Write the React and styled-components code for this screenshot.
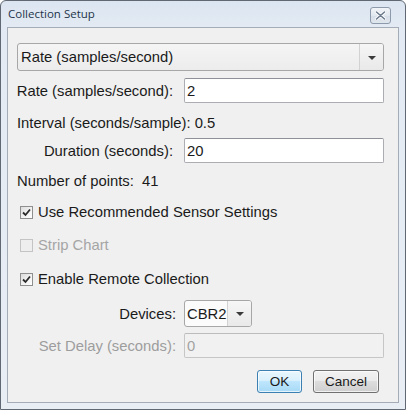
import React from "react";
import styled, { createGlobalStyle } from "styled-components";

const Global = createGlobalStyle`
  html, body { margin: 0; padding: 0; background: #ffffff; }
  * { box-sizing: border-box; }
`;

const Window = styled.div`
  width: 406px;
  height: 410px;
  border: 1px solid #5f6873;
  border-radius: 6px 6px 0 0;
  background: linear-gradient(180deg, #dbe5f1 0px, #e3eaf3 26px, #e9eef5 100%);
  display: flex;
  flex-direction: column;
  font-family: "Liberation Sans", Arial, sans-serif;
  font-size: 14.8px;
  color: #1a1a1a;
  overflow: hidden;
`;

const TitleBar = styled.div`
  height: 26px;
  display: flex;
  align-items: center;
  justify-content: space-between;
  padding: 0 14px 1px 7px;
`;

const Title = styled.span`
  font-family: "Open Sans", "Noto Sans", sans-serif;
  font-size: 11.5px;
  color: #23344a;
`;

const CloseButton = styled.div`
  width: 21px;
  height: 17px;
  margin-top: 3px;
  border: 1px solid #8d9aab;
  border-radius: 3px;
  background: linear-gradient(180deg, #f1f4f8 0%, #e2e8ef 50%, #d6dee8 51%, #e0e6ed 100%);
  display: flex;
  align-items: center;
  justify-content: center;
`;

const Content = styled.div`
  flex: 1;
  margin: 0 6px 6px 6px;
  border: 1px solid #a3acb7;
  background: #f0f0f0;
  padding: 0 14px 0 9px;
  display: flex;
  flex-direction: column;
`;

const Select = styled.div`
  margin-top: ${(p) => p.$mt}px;
  height: ${(p) => p.$h}px;
  width: ${(p) => (p.$w ? `${p.$w}px` : "auto")};
  border: 1px solid #a7a7a7;
  border-radius: 3px;
  background: ${(p) => (p.$light ? "#fbfbfb" : "linear-gradient(180deg, #f5f5f5 0%, #ececec 100%)")};
  display: flex;
  align-items: stretch;
  overflow: hidden;
`;

const SelectText = styled.div`
  flex: 1;
  display: flex;
  align-items: center;
  padding-left: ${(p) => p.$pl}px;
  white-space: nowrap;
`;

const SelectArrow = styled.div`
  width: ${(p) => p.$w}px;
  border-left: 1px solid #d2d2d2;
  display: flex;
  align-items: center;
  justify-content: center;
  background: linear-gradient(180deg, #f6f6f6 0%, #e9e9e9 100%);
`;

const Tri = styled.div`
  width: 0;
  height: 0;
  border-left: 4px solid transparent;
  border-right: 4px solid transparent;
  border-top: 4px solid #3a3a3a;
  margin-top: 1px;
`;

const FieldRow = styled.div`
  margin-top: ${(p) => p.$mt}px;
  height: ${(p) => p.$h}px;
  display: grid;
  grid-template-columns: 156px 1fr;
  column-gap: 11px;
  align-items: stretch;
`;

const Label = styled.div`
  display: flex;
  align-items: center;
  justify-content: flex-end;
  white-space: nowrap;
  padding-right: ${(p) => (p.$nudge ? p.$nudge : 0)}px;
  margin-right: ${(p) => (p.$shift ? -p.$shift : 0)}px;
  color: ${(p) => (p.$disabled ? "#9d9d9d" : "#1a1a1a")};
`;

const Input = styled.div`
  border: 1px solid ${(p) => (p.$disabled ? "#c6c6c6" : "#abadb3")};
  border-top-color: ${(p) => (p.$disabled ? "#bcbcbc" : "#8e9198")};
  border-radius: 2px;
  background: ${(p) => (p.$disabled ? "#f1f1f1" : "#ffffff")};
  color: ${(p) => (p.$disabled ? "#a3a3a3" : "#1a1a1a")};
  display: flex;
  align-items: center;
  padding-left: 2px;
`;

const Info = styled.div`
  margin-top: ${(p) => p.$mt}px;
  height: 20px;
  line-height: 20px;
  white-space: pre;
`;

const CheckRow = styled.div`
  margin-top: ${(p) => p.$mt}px;
  height: 20px;
  display: flex;
  align-items: center;
  padding-left: 3px;
  gap: 5px;
  color: ${(p) => (p.$disabled ? "#a5a5a5" : "#1a1a1a")};
`;

const Box = styled.div`
  width: 13px;
  height: 13px;
  border: 1px solid ${(p) => (p.$disabled ? "#c4c4c4" : "#8e8f8f")};
  background: ${(p) =>
    p.$disabled
      ? "#eeeeee"
      : "linear-gradient(135deg, #dcdcdc 0%, #f4f4f4 60%, #ffffff 100%)"};
  display: flex;
  align-items: center;
  justify-content: center;
`;

const Buttons = styled.div`
  margin-top: 12px;
  display: flex;
  justify-content: flex-end;
  gap: 11px;
  padding-right: 5px;
`;

const Button = styled.div`
  width: ${(p) => p.$w}px;
  height: 23px;
  border: 1px solid ${(p) => (p.$primary ? "#3c7fb1" : "#707070")};
  border-radius: 3px;
  background: ${(p) =>
    p.$primary
      ? "linear-gradient(180deg, #eaf6fd 0%, #d9f0fc 45%, #bee6fd 50%, #a7d9f5 100%)"
      : "linear-gradient(180deg, #f2f2f2 0%, #ebebeb 45%, #dddddd 50%, #cfcfcf 100%)"};
  box-shadow: inset 0 0 0 1px rgba(255, 255, 255, 0.7);
  display: flex;
  align-items: center;
  justify-content: center;
  font-size: 13.5px;
  color: #1a1a1a;
`;

const Check = () => (
  <svg width="9" height="9" viewBox="0 0 9 9">
    <path d="M1 4.5 L3.5 7 L8 1.5" fill="none" stroke="#2b2b2b" strokeWidth="1.8" />
  </svg>
);

const CloseX = () => (
  <svg width="11" height="9" viewBox="0 0 11 9">
    <path d="M1.5 1 L9.5 8 M9.5 1 L1.5 8" stroke="#ffffff" strokeWidth="3.2" strokeLinecap="round" />
    <path d="M1.5 1 L9.5 8 M9.5 1 L1.5 8" stroke="#6c7a8c" strokeWidth="1.6" strokeLinecap="round" />
  </svg>
);

export default function App() {
  return (
    <>
      <Global />
      <Window>
        <TitleBar>
          <Title>Collection Setup</Title>
          <CloseButton>
            <CloseX />
          </CloseButton>
        </TitleBar>
        <Content>
          <Select $mt={15} $h={28}>
            <SelectText $pl={3}>Rate (samples/second)</SelectText>
            <SelectArrow $w={24}>
              <Tri />
            </SelectArrow>
          </Select>

          <FieldRow $mt={7} $h={25}>
            <Label>Rate (samples/second):</Label>
            <Input>2</Input>
          </FieldRow>

          <Info $mt={10}>Interval (seconds/sample): 0.5</Info>

          <FieldRow $mt={5} $h={25}>
            <Label>Duration (seconds):</Label>
            <Input>20</Input>
          </FieldRow>

          <Info $mt={8}>{"Number of points:  41"}</Info>

          <CheckRow $mt={11}>
            <Box>
              <Check />
            </Box>
            Use Recommended Sensor Settings
          </CheckRow>

          <CheckRow $mt={13} $disabled>
            <Box $disabled />
            Strip Chart
          </CheckRow>

          <CheckRow $mt={14}>
            <Box>
              <Check />
            </Box>
            Enable Remote Collection
          </CheckRow>

          <FieldRow $mt={11} $h={27}>
            <Label $shift={3}>Devices:</Label>
            <Select $mt={0} $h={27} $w={68} $light>
              <SelectText $pl={2}>CBR2</SelectText>
              <SelectArrow $w={24}>
                <Tri />
              </SelectArrow>
            </Select>
          </FieldRow>

          <FieldRow $mt={6} $h={25}>
            <Label $disabled $shift={3}>Set Delay (seconds):</Label>
            <Input $disabled>0</Input>
          </FieldRow>

          <Buttons>
            <Button $w={45} $primary>OK</Button>
            <Button $w={66}>Cancel</Button>
          </Buttons>
        </Content>
      </Window>
    </>
  );
}
